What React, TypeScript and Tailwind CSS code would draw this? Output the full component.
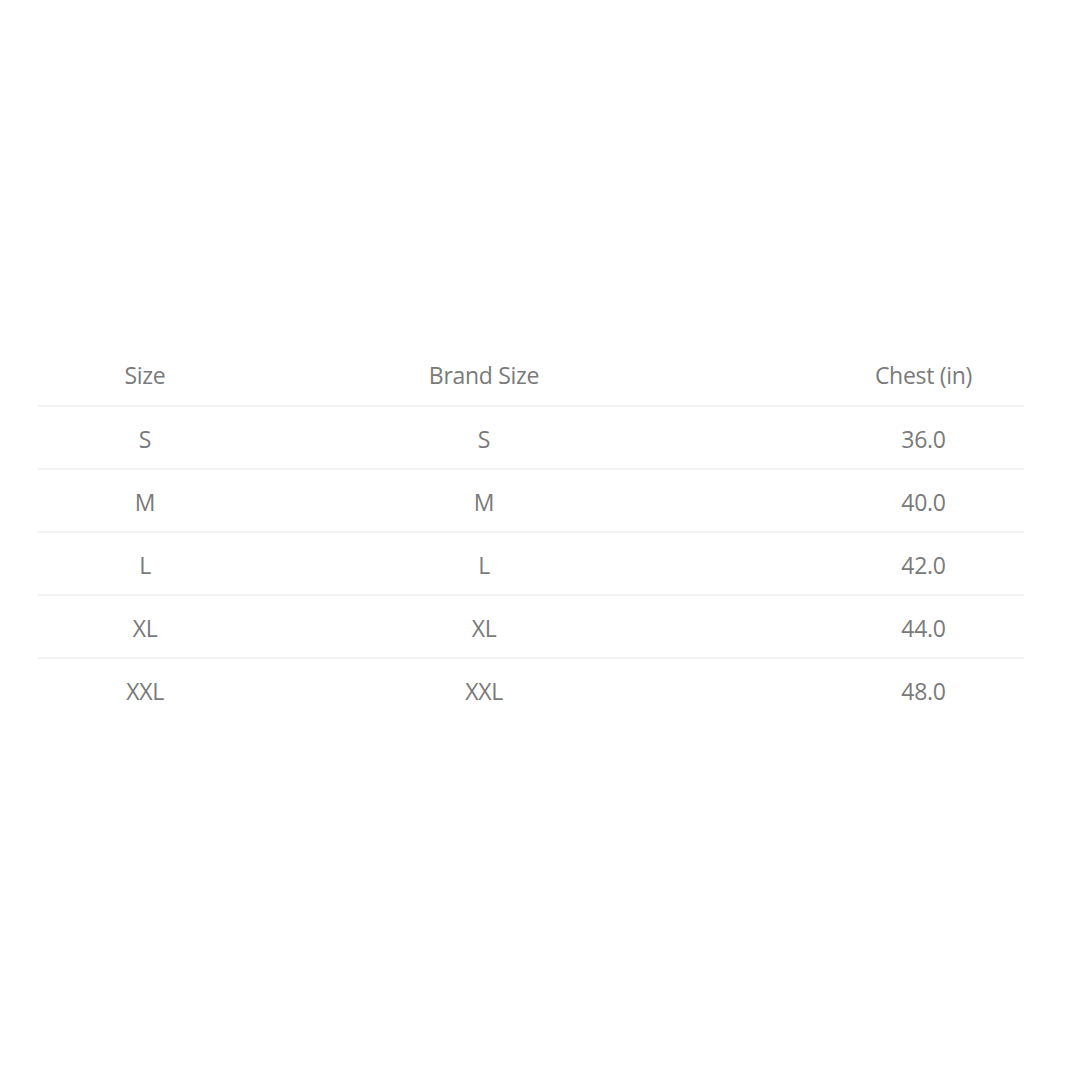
const rows = [
  { size: "S", brand: "S", chest: "36.0" },
  { size: "M", brand: "M", chest: "40.0" },
  { size: "L", brand: "L", chest: "42.0" },
  { size: "XL", brand: "XL", chest: "44.0" },
  { size: "XXL", brand: "XXL", chest: "48.0" },
];

function Row({ a, b, c, border }: { a: string; b: string; c: string; border: boolean }) {
  return (
    <div
      className={
        "grid grid-cols-[214px_464px_1fr] items-center h-[63px] pt-[4px] " +
        (border ? "border-t-2 border-[#f3f3f3]" : "")
      }
    >
      <div className="text-center">{a}</div>
      <div className="text-center">{b}</div>
      <div className="text-center pl-[107px]">{c}</div>
    </div>
  );
}

export default function App() {
  return (
    <div
      className="w-[1080px] h-[1080px] bg-white pt-[342px] pl-[38px] text-[#7a7a7a] text-[23px] tracking-[-0.3px]"
      style={{ fontFamily: '"Open Sans", sans-serif' }}
    >
      <div className="w-[986px]">
        <Row a="Size" b="Brand Size" c="Chest (in)" border={false} />
        {rows.map((r) => (
          <Row key={r.size} a={r.size} b={r.brand} c={r.chest} border />
        ))}
      </div>
    </div>
  );
}
